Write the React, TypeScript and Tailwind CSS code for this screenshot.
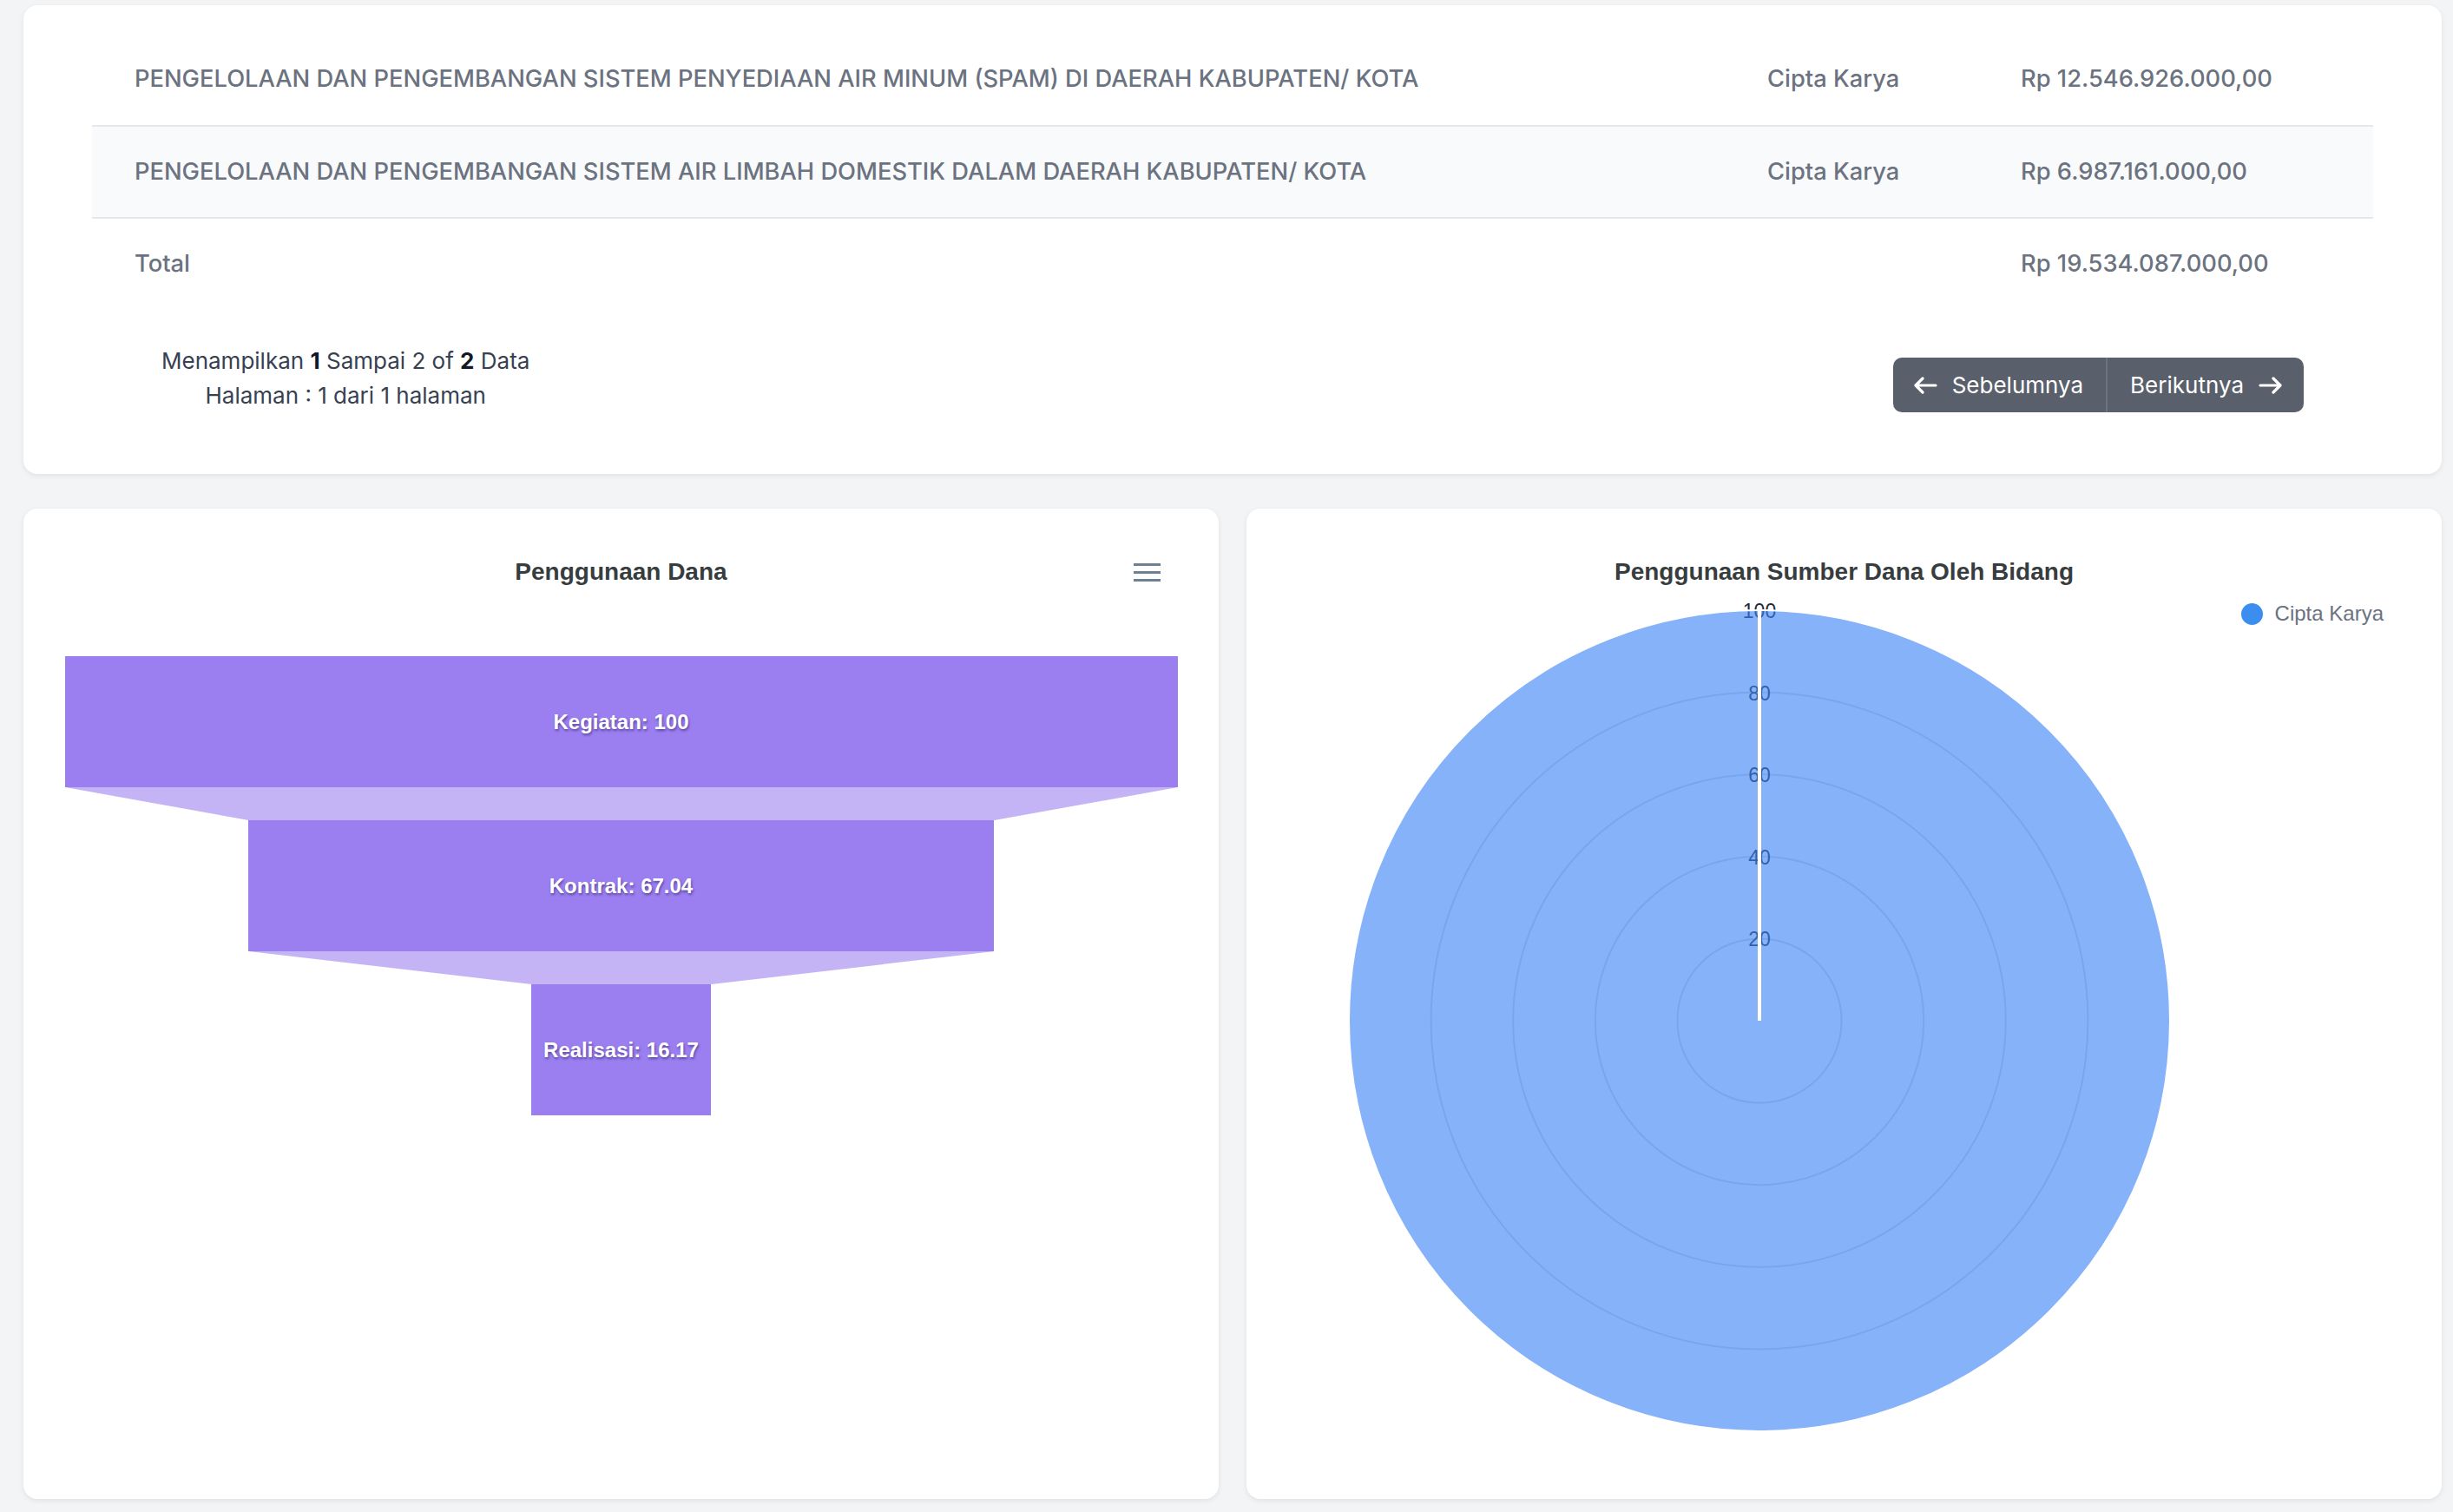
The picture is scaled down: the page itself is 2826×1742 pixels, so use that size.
import React from 'react'

const rows = [
  {
    name: 'PENGELOLAAN DAN PENGEMBANGAN SISTEM PENYEDIAAN AIR MINUM (SPAM) DI DAERAH KABUPATEN/ KOTA',
    bidang: 'Cipta Karya',
    nilai: 'Rp 12.546.926.000,00',
  },
  {
    name: 'PENGELOLAAN DAN PENGEMBANGAN SISTEM AIR LIMBAH DOMESTIK DALAM DAERAH KABUPATEN/ KOTA',
    bidang: 'Cipta Karya',
    nilai: 'Rp 6.987.161.000,00',
  },
]

const funnel = [
  { label: 'Kegiatan', value: 100 },
  { label: 'Kontrak', value: 67.04 },
  { label: 'Realisasi', value: 16.17 },
]

const FUNNEL_W = 1282

function ArrowLeft() {
  return (
    <svg width="28" height="20" viewBox="0 0 28 20" fill="none" stroke="currentColor" strokeWidth="3.2" strokeLinecap="round" strokeLinejoin="round">
      <path d="M26 10H3M11 2 3 10l8 8" />
    </svg>
  )
}

function ArrowRight() {
  return (
    <svg width="28" height="20" viewBox="0 0 28 20" fill="none" stroke="currentColor" strokeWidth="3.2" strokeLinecap="round" strokeLinejoin="round">
      <path d="M2 10h23M17 2l8 8-8 8" />
    </svg>
  )
}

function FunnelChart() {
  return (
    <div className="flex flex-col items-center">
      {funnel.map((item, i) => {
        const w = (FUNNEL_W * item.value) / 100
        const next = funnel[i + 1]
        const nw = next ? (FUNNEL_W * next.value) / 100 : 0
        return (
          <React.Fragment key={item.label}>
            <div
              className="h-[151px] bg-[#9b7ff1] flex items-center justify-center"
              style={{ width: w }}
            >
              <span className="font-['Liberation_Sans',Arial,sans-serif] text-[24px] font-bold text-white [text-shadow:1px_2px_3px_rgba(40,20,90,0.55)]">
                {item.label}: {item.value}
              </span>
            </div>
            {next && (
              <svg width={FUNNEL_W} height="38" className="block">
                <polygon
                  points={`${(FUNNEL_W - w) / 2},0 ${(FUNNEL_W + w) / 2},0 ${(FUNNEL_W + nw) / 2},38 ${(FUNNEL_W - nw) / 2},38`}
                  fill="#c4b4f6"
                />
              </svg>
            )}
          </React.Fragment>
        )
      })}
    </div>
  )
}

function PolarChart() {
  const cx = 591
  const cy = 501
  const r = 473
  const ticks = [20, 40, 60, 80, 100]
  return (
    <svg width="1377" height="1052" className="block">
      {ticks.slice(0, 4).map((t) => (
        <circle key={t} cx={cx} cy={cy} r={(r * t) / 100} fill="none" stroke="#d8dde3" strokeWidth="2" />
      ))}
      {ticks.map((t) => (
        <text
          key={t}
          x={cx}
          y={cy - (r * t) / 100 + 3}
          textAnchor="middle"
          dominantBaseline="middle"
          fontFamily="'Liberation Sans', Arial, sans-serif"
          fontSize="23"
          fill="#1f2937"
        >
          {t}
        </text>
      ))}
      <circle cx={cx} cy={cy} r={r} fill="#3b82f6" fillOpacity="0.62" stroke="#ffffff" strokeWidth="2" />
      <line x1={cx} y1={cy} x2={cx} y2={cy - r} stroke="#ffffff" strokeWidth="4" />
    </svg>
  )
}

function App() {
  return (
    <div className="min-h-screen bg-[#f3f4f6] pt-[6px] pl-[27px] pr-[13px] pb-[15px] font-['Inter',sans-serif]">
      {/* Tabel sub kegiatan */}
      <section className="bg-white rounded-[16px] shadow-[0_2px_6px_rgba(0,0,0,0.08)] px-[79px] pt-[33px] pb-[70px]">
        <table className="w-full table-fixed text-[27.3px] font-medium text-[#6b7280]">
          <colgroup>
            <col />
            <col className="w-[292px]" />
            <col className="w-[455px]" />
          </colgroup>
          <tbody>
            {rows.map((row, i) => (
              <tr key={row.nilai} className={`border-b-2 border-[#e5e7eb] ${i % 2 === 1 ? 'bg-[#f9fafb]' : ''}`}>
                <td className="h-[106px] px-[49px] whitespace-nowrap">{row.name}</td>
                <td className="h-[106px] px-[49px] whitespace-nowrap">{row.bidang}</td>
                <td className="h-[106px] px-[49px] whitespace-nowrap">{row.nilai}</td>
              </tr>
            ))}
            <tr>
              <td className="h-[106px] px-[49px]">Total</td>
              <td className="h-[106px] px-[49px]"></td>
              <td className="h-[106px] px-[49px] whitespace-nowrap">Rp 19.534.087.000,00</td>
            </tr>
          </tbody>
        </table>

        <div className="flex justify-between items-start px-[80px] pt-[39px]">
          <div className="text-center text-[26px] leading-[40px] text-[#374151]">
            <p>
              Menampilkan <span className="font-bold text-[#111827]">1</span> Sampai 2 of{' '}
              <span className="font-bold text-[#111827]">2</span> Data
            </p>
            <p>Halaman : 1 dari 1 halaman</p>
          </div>
          <div className="mt-[16px] flex rounded-[10px] overflow-hidden bg-[#5a606b] text-white text-[26px]">
            <button className="h-[63px] pl-[23px] pr-[26px] flex items-center gap-[17px]">
              <ArrowLeft />
              Sebelumnya
            </button>
            <button className="h-[63px] pl-[26px] pr-[24px] flex items-center gap-[17px] border-l-2 border-[#6b7280]">
              Berikutnya
              <ArrowRight />
            </button>
          </div>
        </div>
      </section>

      {/* Grafik */}
      <div className="mt-[40px] grid grid-cols-2 gap-[32px]">
        <div className="bg-white rounded-[16px] shadow-[0_2px_6px_rgba(0,0,0,0.08)] h-[1141px] font-['Liberation_Sans',Arial,sans-serif]">
          <div className="relative pt-[56px] h-[90px]">
            <h3 className="text-center text-[28px] leading-[34px] font-bold text-[#373d3f]">Penggunaan Dana</h3>
            <div className="absolute right-[67px] top-[63px] flex flex-col gap-[6px]">
              <span className="block w-[31px] h-[3px] bg-[#6e8192]" />
              <span className="block w-[31px] h-[3px] bg-[#6e8192]" />
              <span className="block w-[31px] h-[3px] bg-[#6e8192]" />
            </div>
          </div>
          <div className="mt-[80px]">
            <FunnelChart />
          </div>
        </div>

        <div className="relative bg-white rounded-[16px] shadow-[0_2px_6px_rgba(0,0,0,0.08)] h-[1141px] font-['Liberation_Sans',Arial,sans-serif]">
          <div className="pt-[56px] h-[89px]">
            <h3 className="text-center text-[28px] leading-[34px] font-bold text-[#373d3f]">
              Penggunaan Sumber Dana Oleh Bidang
            </h3>
          </div>
          <div className="absolute top-[103px] right-[67px] flex items-center gap-[14px]">
            <span className="block w-[25px] h-[25px] rounded-full bg-[#3b8ef0]" />
            <span className="text-[24px] text-[#6b7280]">Cipta Karya</span>
          </div>
          <PolarChart />
        </div>
      </div>
    </div>
  )
}

export default App
